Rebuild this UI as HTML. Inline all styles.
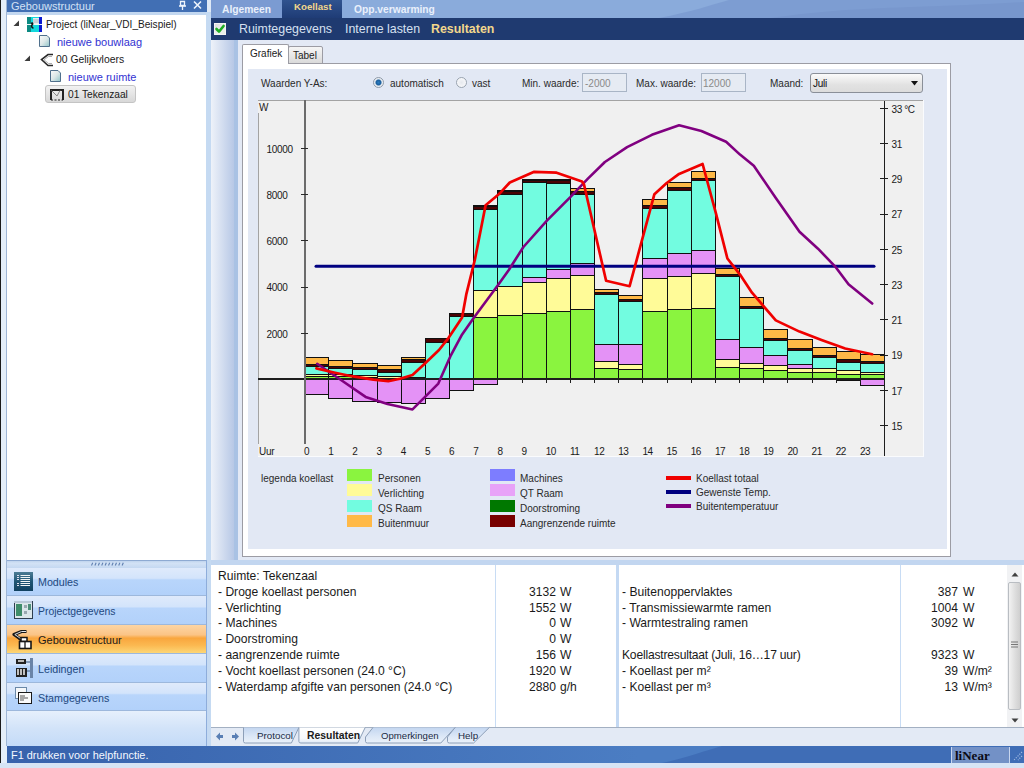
<!DOCTYPE html>
<html><head><meta charset="utf-8">
<style>
*{margin:0;padding:0;box-sizing:border-box}
html,body{width:1024px;height:768px;overflow:hidden;background:#dfe9f6;font-family:"Liberation Sans",sans-serif;position:relative}
.a{position:absolute}
.t{position:absolute;white-space:nowrap;line-height:1}
</style></head><body>
<!-- LEFT PANEL -->
<div class="a" style="left:0;top:0;width:1px;height:768px;background:#1a1a1a"></div>
<div class="a" style="left:1px;top:0;width:6px;height:768px;background:#e4eef9"></div>
<div class="a" style="left:6px;top:0;width:1px;height:746px;background:#9fb6d6"></div>
<div class="a" style="left:7px;top:0;width:200px;height:12px;background:#416fb4"></div>
<div class="t" style="left:11px;top:1px;font-size:11px;color:#d3e1f5;height:11px;overflow:hidden">Gebouwstructuur</div>
<svg class="a" style="left:178px;top:0" width="26" height="11"><path d="M180.5 1.5H184.5V5.5H180.5Z" transform="translate(-178 0)" fill="none" stroke="#eef4fc" stroke-width="1.3"/><path d="M1 6H8M4.5 6V10" stroke="#eef4fc" stroke-width="1.3"/><path d="M16 1.5L23 8.5M23 1.5L16 8.5" stroke="#eef4fc" stroke-width="1.6"/></svg>
<div class="a" style="left:7px;top:12px;width:200px;height:3px;background:#c2d7f0"></div>
<div class="a" style="left:7px;top:15px;width:199px;height:545px;background:#ffffff"></div>
<div class="a" style="left:206px;top:12px;width:5px;height:734px;background:#c5daf2"></div>

<!-- TREE -->
<svg class="a" style="left:13px;top:20px" width="7" height="7"><path d="M6 0.5V6H0.5Z" fill="#3c3c3c"/></svg>
<svg class="a" style="left:27px;top:17px" width="15" height="15">
<rect x="0" y="0" width="15" height="15" fill="#12d8dc"/>
<rect x="0" y="0" width="4" height="7" fill="#0c8a82"/><rect x="0" y="8" width="4" height="7" fill="#0c8a82"/>
<rect x="12" y="0" width="3" height="7" fill="#0a1ad0"/><rect x="12" y="8" width="3" height="7" fill="#0a1ad0"/>
<rect x="0" y="7" width="15" height="1" fill="#e8f8f8"/>
<rect x="6" y="1" width="6" height="6" fill="#e4ecec"/><path d="M7 2V6M9 2V6M11 2V6" stroke="#9ab" stroke-width="0.8"/>
<path d="M4 6.5C6 5.5 6 7 5 8C4 9 5 11 6.5 11" stroke="#111" stroke-width="1.6" fill="none"/>
</svg>
<div class="t" style="left:46px;top:20px;font-size:10.1px;color:#1a1a1a">Project (liNear_VDI_Beispiel)</div>
<svg class="a" style="left:39px;top:35px" width="12" height="13">
<defs><linearGradient id="dg" x1="0" y1="0" x2="1" y2="1"><stop offset="0" stop-color="#fafafa"/><stop offset="0.5" stop-color="#dde8e8"/><stop offset="1" stop-color="#8fc4c8"/></linearGradient></defs>
<path d="M0.5 0.5H8L10.5 3V11.5H0.5Z" fill="url(#dg)" stroke="#50708c"/>
</svg>
<div class="t" style="left:57px;top:37px;font-size:11px;color:#3232d2">nieuwe bouwlaag</div>
<svg class="a" style="left:24px;top:55px" width="7" height="7"><path d="M6 0.5V6H0.5Z" fill="#3c3c3c"/></svg>
<svg class="a" style="left:40px;top:53px" width="14" height="14"><path d="M13 1.5H8L1.5 6.5L8 12.5H13" fill="none" stroke="#2a2a2a" stroke-width="1.6"/><path d="M12 3.5H8.5L4 6.8L8.5 10.5H12" fill="none" stroke="#9a9a9a" stroke-width="0.8"/></svg>
<div class="t" style="left:56px;top:55px;font-size:10.4px;color:#1a1a1a">00 Gelijkvloers</div>
<svg class="a" style="left:50px;top:70px" width="12" height="13">
<path d="M0.5 0.5H8L10.5 3V11.5H0.5Z" fill="url(#dg)" stroke="#50708c"/>
</svg>
<div class="t" style="left:68px;top:72px;font-size:11px;color:#3232d2">nieuwe ruimte</div>
<div class="a" style="left:45px;top:85px;width:91px;height:18px;border:1px solid #c4c4c4;border-radius:3px;background:linear-gradient(#f2f2f2,#d8d8d8)"></div>
<svg class="a" style="left:50px;top:89px" width="14" height="12"><path d="M1 11V1H13V11" fill="none" stroke="#222" stroke-width="2"/><path d="M1.5 1.5L7 7L10 1.5" fill="none" stroke="#888" stroke-width="1"/><path d="M1 11H13" stroke="#222" stroke-width="1.2" stroke-dasharray="2 1.5"/></svg>
<div class="t" style="left:68px;top:90px;font-size:10.2px;color:#1a1a1a">01 Tekenzaal</div>

<!-- NAV BUTTONS -->
<div class="a" style="left:7px;top:568px;width:199px;height:28px;background:linear-gradient(#dfeafb 0%,#d3e4fb 38%,#b8d5fb 44%,#b2d1fa 100%);border-bottom:1px solid #9db8dc"></div>
<div class="a" style="left:7px;top:596px;width:199px;height:29px;background:linear-gradient(#dfeafb 0%,#d3e4fb 38%,#b8d5fb 44%,#b2d1fa 100%);border-bottom:1px solid #9db8dc"></div>
<div class="a" style="left:7px;top:625px;width:199px;height:29px;background:linear-gradient(#fdd5a4 0%,#fbc486 35%,#f9a63e 47%,#fbb850 72%,#fdd676 100%);border-bottom:1px solid #9db8dc"></div>
<div class="a" style="left:7px;top:654px;width:199px;height:29px;background:linear-gradient(#dfeafb 0%,#d3e4fb 38%,#b8d5fb 44%,#b2d1fa 100%);border-bottom:1px solid #9db8dc"></div>
<div class="a" style="left:7px;top:683px;width:199px;height:28px;background:linear-gradient(#dfeafb 0%,#d3e4fb 38%,#b8d5fb 44%,#b2d1fa 100%);border-bottom:1px solid #9db8dc"></div>
<div class="a" style="left:7px;top:711px;width:199px;height:35px;background:linear-gradient(#e6f0fc,#d2e3f9 50%,#c4dbf8)"></div>
<div class="a" style="left:206px;top:560px;width:1px;height:186px;background:#8eaddb"></div>
<div class="t" style="left:38px;top:577px;font-size:10.7px;color:#22487e">Modules</div>
<div class="t" style="left:38px;top:607px;font-size:10.4px;color:#22487e">Projectgegevens</div>
<div class="t" style="left:38px;top:635px;font-size:11px;color:#1a1a1a">Gebouwstructuur</div>
<div class="t" style="left:38px;top:664px;font-size:10.7px;color:#22487e">Leidingen</div>
<div class="t" style="left:38px;top:693px;font-size:10.7px;color:#22487e">Stamgegevens</div>
<svg class="a" style="left:14px;top:572px" width="19" height="19">
<defs><linearGradient id="mg" x1="0" y1="0" x2="0" y2="1"><stop offset="0" stop-color="#4c7c94"/><stop offset="0.5" stop-color="#1e5474"/><stop offset="1" stop-color="#104060"/></linearGradient></defs>
<rect x="0" y="0" width="19" height="19" fill="url(#mg)"/>
<path d="M3 3.5H5M3 5.5H5M3 7.5H5M3 11.5H5M3 13.5H5" stroke="#dde" stroke-width="1"/>
<path d="M6.5 3.5H16M6.5 5.5H16M6.5 7.5H16M6.5 9.5H16M6.5 11.5H16M6.5 13.5H16" stroke="#f0f4f4" stroke-width="1"/>
</svg>
<svg class="a" style="left:13px;top:600px" width="21" height="20">
<rect x="1.5" y="1.5" width="18" height="17" fill="#dbe6ea" stroke="#2e3e50"/>
<rect x="1" y="1" width="18" height="2" fill="#b8c8d8"/>
<rect x="3" y="4" width="6" height="12" fill="#3e8c6a"/>
<rect x="11" y="5" width="3" height="3" fill="#99a8b0"/><rect x="11" y="11" width="3" height="3" fill="#99a8b0"/>
<rect x="15" y="4" width="3" height="6" fill="#4d8e78"/>
</svg>
<svg class="a" style="left:12px;top:629px" width="21" height="21">
<path d="M14.5 2.5H9.5L2 5.5L7 9L10 11.5" fill="none" stroke="#161616" stroke-width="3.2" stroke-linejoin="round"/>
<path d="M14 2.5H9.5L2.8 5.5L7.3 8.6L9.8 10.6" fill="none" stroke="#dfe3e8" stroke-width="1"/>
<rect x="9" y="8.5" width="6" height="4" fill="#fff" stroke="#161616" stroke-width="1.5"/>
<rect x="7.5" y="12.5" width="11.5" height="7" fill="#fff" stroke="#161616" stroke-width="1.6"/>
<path d="M13 12.5V19.5" stroke="#161616" stroke-width="1.3"/>
</svg>
<svg class="a" style="left:16px;top:658px" width="18" height="20">
<rect x="0" y="1" width="10" height="5" fill="#222"/><path d="M2 3H8" stroke="#eee" stroke-width="1.5"/>
<rect x="0" y="10" width="11" height="9" fill="#222"/><path d="M2 11V17M5 11V17M8 11V17" stroke="#f4f4f4" stroke-width="1.5"/>
<rect x="14" y="0" width="3" height="20" fill="#6a84a8"/><path d="M10 4H14M11 13H14" stroke="#6a84a8" stroke-width="1.5"/>
</svg>
<svg class="a" style="left:15px;top:687px" width="17" height="18">
<rect x="0.5" y="0.5" width="11" height="11" fill="#f6f8fa" stroke="#6a88a8"/>
<rect x="3.5" y="5.5" width="13" height="11" fill="#fafafa" stroke="#1a1a1a"/>
<path d="M5 9H10M5 11H13M5 13H9" stroke="#555" stroke-width="1"/>
</svg>
<!-- SPLITTER + NAV -->
<div class="a" style="left:7px;top:560px;width:199px;height:8px;background:linear-gradient(#b6cdea,#d3e2f5 40%,#c4d8f1)"></div>
<div class="a" style="left:7px;top:560px;width:199px;height:1px;background:#8eaad2"></div>
<svg class="a" style="left:90px;top:562px" width="36" height="4"><path d="M1.5 3.5L2.7 0.8" stroke="#5f7fb0" stroke-width="1.1"/><path d="M4.9 3.5L6.1 0.8" stroke="#5f7fb0" stroke-width="1.1"/><path d="M8.3 3.5L9.5 0.8" stroke="#5f7fb0" stroke-width="1.1"/><path d="M11.7 3.5L12.9 0.8" stroke="#5f7fb0" stroke-width="1.1"/><path d="M15.1 3.5L16.3 0.8" stroke="#5f7fb0" stroke-width="1.1"/><path d="M18.5 3.5L19.7 0.8" stroke="#5f7fb0" stroke-width="1.1"/><path d="M21.9 3.5L23.1 0.8" stroke="#5f7fb0" stroke-width="1.1"/><path d="M25.3 3.5L26.5 0.8" stroke="#5f7fb0" stroke-width="1.1"/><path d="M28.7 3.5L29.9 0.8" stroke="#5f7fb0" stroke-width="1.1"/><path d="M32.1 3.5L33.3 0.8" stroke="#5f7fb0" stroke-width="1.1"/></svg>

<!-- RIGHT TOP -->
<svg class="a" style="left:211px;top:0" width="813" height="18"><rect width="813" height="18" fill="#8aabdb"/>
<path d="M448 18C480 12 500 5 518 0H813V18Z" fill="#7d9dd2"/><path d="M560 18C600 12 640 9 700 7C740 6 780 4 813 2V18Z" fill="#7897cd"/>
<rect x="0" y="0" width="71" height="18" fill="#7b9bd2"/></svg>
<div class="a" style="left:282px;top:0;width:60px;height:18px;background:linear-gradient(#30538f,#1f3c76)"></div>
<div class="t" style="left:222px;top:5px;font-size:10.25px;font-weight:bold;color:#e9f0fb">Algemeen</div>
<div class="t" style="left:294px;top:2px;font-size:9.7px;font-weight:bold;color:#f2d78c">Koellast</div>
<div class="t" style="left:354px;top:5px;font-size:10.25px;font-weight:bold;color:#e9f0fb">Opp.verwarming</div>
<div class="a" style="left:211px;top:18px;width:813px;height:22px;background:#1f3a70"></div>
<div class="a" style="left:214px;top:23px;width:12px;height:12px;background:linear-gradient(135deg,#dcdcdc,#f0f0f0 60%,#e6f0e6);border:1px solid #f4f4f4"></div>
<svg class="a" style="left:214px;top:23px" width="12" height="12"><path d="M2.5 6L5 8.6L9.6 3" fill="none" stroke="#1fae24" stroke-width="2.6" stroke-linecap="round" stroke-linejoin="round"/></svg>
<div class="t" style="left:239px;top:23px;font-size:12.4px;color:#d6e0f0">Ruimtegegevens</div>
<div class="t" style="left:345px;top:23px;font-size:12.4px;color:#d6e0f0">Interne lasten</div>
<div class="t" style="left:431px;top:23px;font-size:12.4px;font-weight:bold;color:#f2d78c">Resultaten</div>

<!-- CONTENT AREA -->
<div class="a" style="left:211px;top:40px;width:813px;height:520px;background:#e3e9f5"></div>
<div class="a" style="left:211px;top:40px;width:23px;height:520px;background:linear-gradient(90deg,#eef2f9,#b7c8e6)"></div>
<div class="a" style="left:234px;top:40px;width:4px;height:520px;background:#a9c2e4"></div>

<!-- TAB CONTROL -->
<div class="a" style="left:242px;top:63px;width:709px;height:494px;border:1px solid #9c9ca4;background:#fff"></div>
<div class="a" style="left:242px;top:44px;width:47px;height:20px;border:1px solid #9c9ca4;border-bottom:none;background:#fff;border-radius:2px 2px 0 0"></div>
<div class="a" style="left:288px;top:46px;width:35px;height:18px;border:1px solid #9c9ca4;background:linear-gradient(#f6f6f6,#dadada);border-radius:2px 2px 0 0"></div>
<div class="t" style="left:250px;top:49px;font-size:10px;color:#222">Grafiek</div>
<div class="t" style="left:293px;top:51px;font-size:10px;color:#222">Tabel</div>
<div class="a" style="left:248px;top:69px;width:699px;height:480px;background:#e2e8f4"></div>


<!-- CHART CONTROLS -->
<div class="t" style="left:261px;top:79px;font-size:10px;color:#2a2a2a">Waarden Y-As:</div>
<div class="a" style="left:373px;top:77px;width:11px;height:11px;border-radius:50%;border:1px solid #8e9aa8;background:radial-gradient(circle at 50% 50%,#2a7cc0 0,#1c5f9c 2.5px,#dfe6ee 3.5px,#f6f8fa 5px)"></div>
<div class="t" style="left:390px;top:79px;font-size:10px;color:#2a2a2a">automatisch</div>
<div class="a" style="left:456px;top:77px;width:11px;height:11px;border-radius:50%;border:1px solid #9aa4b0;background:radial-gradient(circle at 50% 50%,#e6e9ee 0,#f8f9fb 5px)"></div>
<div class="t" style="left:472px;top:79px;font-size:10px;color:#2a2a2a">vast</div>
<div class="t" style="left:522px;top:79px;font-size:10px;color:#2a2a2a">Min. waarde:</div>
<div class="a" style="left:582px;top:73px;width:45px;height:19px;border:1px solid #a9b5c6;background:#e6ebf3"></div>
<div class="t" style="left:585px;top:79px;font-size:10px;color:#8a8a8a">-2000</div>
<div class="t" style="left:636px;top:79px;font-size:10px;color:#2a2a2a">Max. waarde:</div>
<div class="a" style="left:701px;top:73px;width:45px;height:19px;border:1px solid #a9b5c6;background:#e6ebf3"></div>
<div class="t" style="left:703px;top:79px;font-size:10px;color:#8a8a8a">12000</div>
<div class="t" style="left:770px;top:79px;font-size:10px;color:#2a2a2a">Maand:</div>
<div class="a" style="left:810px;top:73px;width:113px;height:20px;border:1px solid #8a8f98;border-radius:3px;background:linear-gradient(#fbfbfb,#e2e2e2 60%,#dcdcdc)"></div>
<div class="t" style="left:813px;top:79px;font-size:10px;color:#111;letter-spacing:-0.3px">Juli</div>
<svg class="a" style="left:911px;top:81px" width="8" height="5"><path d="M0 0H7L3.5 4.5Z" fill="#111"/></svg>

<!-- LEGEND TEXT -->
<div class="t" style="left:261px;top:474px;font-size:10px;color:#2a2a2a">legenda koellast</div>
<div class="t" style="left:378px;top:474px;font-size:10px;color:#2a2a2a">Personen</div>
<div class="t" style="left:378px;top:489px;font-size:10px;color:#2a2a2a">Verlichting</div>
<div class="t" style="left:378px;top:504px;font-size:10px;color:#2a2a2a">QS Raam</div>
<div class="t" style="left:378px;top:519px;font-size:10px;color:#2a2a2a">Buitenmuur</div>
<div class="t" style="left:520px;top:474px;font-size:10px;color:#2a2a2a">Machines</div>
<div class="t" style="left:520px;top:489px;font-size:10px;color:#2a2a2a">QT Raam</div>
<div class="t" style="left:520px;top:504px;font-size:10px;color:#2a2a2a">Doorstroming</div>
<div class="t" style="left:520px;top:519px;font-size:10px;color:#2a2a2a">Aangrenzende ruimte</div>
<div class="t" style="left:696px;top:474px;font-size:10px;color:#2a2a2a">Koellast totaal</div>
<div class="t" style="left:696px;top:488px;font-size:10px;color:#2a2a2a">Gewenste Temp.</div>
<div class="t" style="left:696px;top:502px;font-size:10px;color:#2a2a2a">Buitentemperatuur</div>
<svg class="a" style="left:0;top:0" width="1024" height="768" shape-rendering="crispEdges">
<rect x="258" y="100" width="665" height="356" fill="#f0f0f0"/>
<rect x="258" y="456" width="666" height="1" fill="#fafbfd"/>
<rect x="923" y="100" width="1" height="357" fill="#fafbfd"/>
<rect x="258" y="100" width="665" height="1" fill="#a3a3a3"/>
<rect x="258" y="113" width="1" height="331" fill="#a3a3a3"/>
<rect x="304" y="357" width="24" height="7" fill="#ffb947"/>
<rect x="304" y="364" width="24" height="2" fill="#4a0404"/>
<rect x="304" y="366" width="24" height="8" fill="#72fce0"/>
<rect x="304" y="374" width="24" height="2" fill="#fffb98"/>
<rect x="304" y="376" width="24" height="2" fill="#8af43f"/>
<rect x="304" y="379" width="24" height="15" fill="#e492f6"/>
<path d="M304.5 357.5H328.5V364.5H304.5Z" fill="none" stroke="#101010" stroke-width="1"/>
<path d="M304.5 364.5H328.5V366.5H304.5Z" fill="none" stroke="#101010" stroke-width="1"/>
<path d="M304.5 366.5H328.5V374.5H304.5Z" fill="none" stroke="#101010" stroke-width="1"/>
<path d="M304.5 374.5H328.5V376.5H304.5Z" fill="none" stroke="#101010" stroke-width="1"/>
<path d="M304.5 376.5H328.5V378.5H304.5Z" fill="none" stroke="#101010" stroke-width="1"/>
<path d="M304.5 379.5H328.5V394.5H304.5Z" fill="none" stroke="#101010" stroke-width="1"/>
<rect x="328" y="360" width="24" height="6" fill="#ffb947"/>
<rect x="328" y="366" width="24" height="2" fill="#4a0404"/>
<rect x="328" y="368" width="24" height="6" fill="#72fce0"/>
<rect x="328" y="374" width="24" height="2" fill="#fffb98"/>
<rect x="328" y="376" width="24" height="2" fill="#8af43f"/>
<rect x="328" y="379" width="24" height="19" fill="#e492f6"/>
<path d="M328.5 360.5H352.5V366.5H328.5Z" fill="none" stroke="#101010" stroke-width="1"/>
<path d="M328.5 366.5H352.5V368.5H328.5Z" fill="none" stroke="#101010" stroke-width="1"/>
<path d="M328.5 368.5H352.5V374.5H328.5Z" fill="none" stroke="#101010" stroke-width="1"/>
<path d="M328.5 374.5H352.5V376.5H328.5Z" fill="none" stroke="#101010" stroke-width="1"/>
<path d="M328.5 376.5H352.5V378.5H328.5Z" fill="none" stroke="#101010" stroke-width="1"/>
<path d="M328.5 379.5H352.5V398.5H328.5Z" fill="none" stroke="#101010" stroke-width="1"/>
<rect x="352" y="363" width="25" height="4" fill="#ffb947"/>
<rect x="352" y="367" width="25" height="2" fill="#4a0404"/>
<rect x="352" y="369" width="25" height="6" fill="#72fce0"/>
<rect x="352" y="375" width="25" height="2" fill="#fffb98"/>
<rect x="352" y="377" width="25" height="1" fill="#8af43f"/>
<rect x="352" y="379" width="25" height="22" fill="#e492f6"/>
<path d="M352.5 363.5H377.5V367.5H352.5Z" fill="none" stroke="#101010" stroke-width="1"/>
<path d="M352.5 367.5H377.5V369.5H352.5Z" fill="none" stroke="#101010" stroke-width="1"/>
<path d="M352.5 369.5H377.5V375.5H352.5Z" fill="none" stroke="#101010" stroke-width="1"/>
<path d="M352.5 375.5H377.5V377.5H352.5Z" fill="none" stroke="#101010" stroke-width="1"/>
<path d="M352.5 377.5H377.5V378.5H352.5Z" fill="none" stroke="#101010" stroke-width="1"/>
<path d="M352.5 379.5H377.5V401.5H352.5Z" fill="none" stroke="#101010" stroke-width="1"/>
<rect x="377" y="365" width="24" height="4" fill="#ffb947"/>
<rect x="377" y="369" width="24" height="3" fill="#4a0404"/>
<rect x="377" y="372" width="24" height="4" fill="#72fce0"/>
<rect x="377" y="376" width="24" height="2" fill="#fffb98"/>
<rect x="377" y="378" width="24" height="1" fill="#8af43f"/>
<rect x="377" y="379" width="24" height="23" fill="#e492f6"/>
<path d="M377.5 365.5H401.5V369.5H377.5Z" fill="none" stroke="#101010" stroke-width="1"/>
<path d="M377.5 369.5H401.5V372.5H377.5Z" fill="none" stroke="#101010" stroke-width="1"/>
<path d="M377.5 372.5H401.5V376.5H377.5Z" fill="none" stroke="#101010" stroke-width="1"/>
<path d="M377.5 376.5H401.5V378.5H377.5Z" fill="none" stroke="#101010" stroke-width="1"/>
<path d="M377.5 378.5H401.5V378.5H377.5Z" fill="none" stroke="#101010" stroke-width="1"/>
<path d="M377.5 379.5H401.5V402.5H377.5Z" fill="none" stroke="#101010" stroke-width="1"/>
<rect x="401" y="357" width="24" height="2" fill="#ffb947"/>
<rect x="401" y="359" width="24" height="3" fill="#4a0404"/>
<rect x="401" y="362" width="24" height="15" fill="#72fce0"/>
<rect x="401" y="377" width="24" height="1" fill="#fffb98"/>
<rect x="401" y="378" width="24" height="1" fill="#8af43f"/>
<rect x="401" y="379" width="24" height="24" fill="#e492f6"/>
<path d="M401.5 357.5H425.5V359.5H401.5Z" fill="none" stroke="#101010" stroke-width="1"/>
<path d="M401.5 359.5H425.5V362.5H401.5Z" fill="none" stroke="#101010" stroke-width="1"/>
<path d="M401.5 362.5H425.5V377.5H401.5Z" fill="none" stroke="#101010" stroke-width="1"/>
<path d="M401.5 377.5H425.5V378.5H401.5Z" fill="none" stroke="#101010" stroke-width="1"/>
<path d="M401.5 378.5H425.5V378.5H401.5Z" fill="none" stroke="#101010" stroke-width="1"/>
<path d="M401.5 379.5H425.5V403.5H401.5Z" fill="none" stroke="#101010" stroke-width="1"/>
<rect x="425" y="338" width="24" height="1" fill="#ffb947"/>
<rect x="425" y="338" width="24" height="4" fill="#4a0404"/>
<rect x="425" y="342" width="24" height="36" fill="#72fce0"/>
<rect x="425" y="378" width="24" height="1" fill="#8af43f"/>
<rect x="425" y="379" width="24" height="19" fill="#e492f6"/>
<path d="M425.5 338.5H449.5V338.5H425.5Z" fill="none" stroke="#101010" stroke-width="1"/>
<path d="M425.5 338.5H449.5V342.5H425.5Z" fill="none" stroke="#101010" stroke-width="1"/>
<path d="M425.5 342.5H449.5V378.5H425.5Z" fill="none" stroke="#101010" stroke-width="1"/>
<path d="M425.5 378.5H449.5V378.5H425.5Z" fill="none" stroke="#101010" stroke-width="1"/>
<path d="M425.5 379.5H449.5V398.5H425.5Z" fill="none" stroke="#101010" stroke-width="1"/>
<rect x="449" y="313" width="24" height="1" fill="#ffb947"/>
<rect x="449" y="313" width="24" height="3" fill="#4a0404"/>
<rect x="449" y="316" width="24" height="62" fill="#72fce0"/>
<rect x="449" y="379" width="24" height="11" fill="#e492f6"/>
<path d="M449.5 313.5H473.5V313.5H449.5Z" fill="none" stroke="#101010" stroke-width="1"/>
<path d="M449.5 313.5H473.5V316.5H449.5Z" fill="none" stroke="#101010" stroke-width="1"/>
<path d="M449.5 316.5H473.5V378.5H449.5Z" fill="none" stroke="#101010" stroke-width="1"/>
<path d="M449.5 379.5H473.5V390.5H449.5Z" fill="none" stroke="#101010" stroke-width="1"/>
<rect x="473" y="205" width="24" height="1" fill="#ffb947"/>
<rect x="473" y="206" width="24" height="3" fill="#4a0404"/>
<rect x="473" y="209" width="24" height="81" fill="#72fce0"/>
<rect x="473" y="290" width="24" height="27" fill="#fffb98"/>
<rect x="473" y="317" width="24" height="61" fill="#8af43f"/>
<rect x="473" y="379" width="24" height="5" fill="#e492f6"/>
<path d="M473.5 205.5H497.5V206.5H473.5Z" fill="none" stroke="#101010" stroke-width="1"/>
<path d="M473.5 206.5H497.5V209.5H473.5Z" fill="none" stroke="#101010" stroke-width="1"/>
<path d="M473.5 209.5H497.5V290.5H473.5Z" fill="none" stroke="#101010" stroke-width="1"/>
<path d="M473.5 290.5H497.5V317.5H473.5Z" fill="none" stroke="#101010" stroke-width="1"/>
<path d="M473.5 317.5H497.5V378.5H473.5Z" fill="none" stroke="#101010" stroke-width="1"/>
<path d="M473.5 379.5H497.5V384.5H473.5Z" fill="none" stroke="#101010" stroke-width="1"/>
<rect x="497" y="190" width="25" height="1" fill="#ffb947"/>
<rect x="497" y="191" width="25" height="3" fill="#4a0404"/>
<rect x="497" y="194" width="25" height="92" fill="#72fce0"/>
<rect x="497" y="286" width="25" height="29" fill="#fffb98"/>
<rect x="497" y="315" width="25" height="63" fill="#8af43f"/>
<path d="M497.5 190.5H522.5V191.5H497.5Z" fill="none" stroke="#101010" stroke-width="1"/>
<path d="M497.5 191.5H522.5V194.5H497.5Z" fill="none" stroke="#101010" stroke-width="1"/>
<path d="M497.5 194.5H522.5V286.5H497.5Z" fill="none" stroke="#101010" stroke-width="1"/>
<path d="M497.5 286.5H522.5V315.5H497.5Z" fill="none" stroke="#101010" stroke-width="1"/>
<path d="M497.5 315.5H522.5V378.5H497.5Z" fill="none" stroke="#101010" stroke-width="1"/>
<rect x="522" y="179" width="24" height="1" fill="#ffb947"/>
<rect x="522" y="180" width="24" height="2" fill="#4a0404"/>
<rect x="522" y="182" width="24" height="95" fill="#72fce0"/>
<rect x="522" y="277" width="24" height="5" fill="#e492f6"/>
<rect x="522" y="282" width="24" height="31" fill="#fffb98"/>
<rect x="522" y="313" width="24" height="65" fill="#8af43f"/>
<path d="M522.5 179.5H546.5V180.5H522.5Z" fill="none" stroke="#101010" stroke-width="1"/>
<path d="M522.5 180.5H546.5V182.5H522.5Z" fill="none" stroke="#101010" stroke-width="1"/>
<path d="M522.5 182.5H546.5V277.5H522.5Z" fill="none" stroke="#101010" stroke-width="1"/>
<path d="M522.5 277.5H546.5V282.5H522.5Z" fill="none" stroke="#101010" stroke-width="1"/>
<path d="M522.5 282.5H546.5V313.5H522.5Z" fill="none" stroke="#101010" stroke-width="1"/>
<path d="M522.5 313.5H546.5V378.5H522.5Z" fill="none" stroke="#101010" stroke-width="1"/>
<rect x="546" y="179" width="24" height="1" fill="#ffb947"/>
<rect x="546" y="180" width="24" height="3" fill="#4a0404"/>
<rect x="546" y="183" width="24" height="86" fill="#72fce0"/>
<rect x="546" y="269" width="24" height="9" fill="#e492f6"/>
<rect x="546" y="278" width="24" height="33" fill="#fffb98"/>
<rect x="546" y="311" width="24" height="67" fill="#8af43f"/>
<path d="M546.5 179.5H570.5V180.5H546.5Z" fill="none" stroke="#101010" stroke-width="1"/>
<path d="M546.5 180.5H570.5V183.5H546.5Z" fill="none" stroke="#101010" stroke-width="1"/>
<path d="M546.5 183.5H570.5V269.5H546.5Z" fill="none" stroke="#101010" stroke-width="1"/>
<path d="M546.5 269.5H570.5V278.5H546.5Z" fill="none" stroke="#101010" stroke-width="1"/>
<path d="M546.5 278.5H570.5V311.5H546.5Z" fill="none" stroke="#101010" stroke-width="1"/>
<path d="M546.5 311.5H570.5V378.5H546.5Z" fill="none" stroke="#101010" stroke-width="1"/>
<rect x="570" y="188" width="24" height="3" fill="#ffb947"/>
<rect x="570" y="191" width="24" height="3" fill="#4a0404"/>
<rect x="570" y="194" width="24" height="69" fill="#72fce0"/>
<rect x="570" y="263" width="24" height="12" fill="#e492f6"/>
<rect x="570" y="275" width="24" height="34" fill="#fffb98"/>
<rect x="570" y="309" width="24" height="69" fill="#8af43f"/>
<path d="M570.5 188.5H594.5V191.5H570.5Z" fill="none" stroke="#101010" stroke-width="1"/>
<path d="M570.5 191.5H594.5V194.5H570.5Z" fill="none" stroke="#101010" stroke-width="1"/>
<path d="M570.5 194.5H594.5V263.5H570.5Z" fill="none" stroke="#101010" stroke-width="1"/>
<path d="M570.5 263.5H594.5V275.5H570.5Z" fill="none" stroke="#101010" stroke-width="1"/>
<path d="M570.5 275.5H594.5V309.5H570.5Z" fill="none" stroke="#101010" stroke-width="1"/>
<path d="M570.5 309.5H594.5V378.5H570.5Z" fill="none" stroke="#101010" stroke-width="1"/>
<rect x="594" y="289" width="24" height="3" fill="#ffb947"/>
<rect x="594" y="292" width="24" height="2" fill="#4a0404"/>
<rect x="594" y="294" width="24" height="50" fill="#72fce0"/>
<rect x="594" y="344" width="24" height="17" fill="#e492f6"/>
<rect x="594" y="361" width="24" height="7" fill="#fffb98"/>
<rect x="594" y="368" width="24" height="10" fill="#8af43f"/>
<path d="M594.5 289.5H618.5V292.5H594.5Z" fill="none" stroke="#101010" stroke-width="1"/>
<path d="M594.5 292.5H618.5V294.5H594.5Z" fill="none" stroke="#101010" stroke-width="1"/>
<path d="M594.5 294.5H618.5V344.5H594.5Z" fill="none" stroke="#101010" stroke-width="1"/>
<path d="M594.5 344.5H618.5V361.5H594.5Z" fill="none" stroke="#101010" stroke-width="1"/>
<path d="M594.5 361.5H618.5V368.5H594.5Z" fill="none" stroke="#101010" stroke-width="1"/>
<path d="M594.5 368.5H618.5V378.5H594.5Z" fill="none" stroke="#101010" stroke-width="1"/>
<rect x="618" y="295" width="24" height="4" fill="#ffb947"/>
<rect x="618" y="299" width="24" height="2" fill="#4a0404"/>
<rect x="618" y="301" width="24" height="43" fill="#72fce0"/>
<rect x="618" y="344" width="24" height="20" fill="#e492f6"/>
<rect x="618" y="364" width="24" height="5" fill="#fffb98"/>
<rect x="618" y="369" width="24" height="9" fill="#8af43f"/>
<path d="M618.5 295.5H642.5V299.5H618.5Z" fill="none" stroke="#101010" stroke-width="1"/>
<path d="M618.5 299.5H642.5V301.5H618.5Z" fill="none" stroke="#101010" stroke-width="1"/>
<path d="M618.5 301.5H642.5V344.5H618.5Z" fill="none" stroke="#101010" stroke-width="1"/>
<path d="M618.5 344.5H642.5V364.5H618.5Z" fill="none" stroke="#101010" stroke-width="1"/>
<path d="M618.5 364.5H642.5V369.5H618.5Z" fill="none" stroke="#101010" stroke-width="1"/>
<path d="M618.5 369.5H642.5V378.5H618.5Z" fill="none" stroke="#101010" stroke-width="1"/>
<rect x="642" y="199" width="25" height="6" fill="#ffb947"/>
<rect x="642" y="205" width="25" height="3" fill="#4a0404"/>
<rect x="642" y="208" width="25" height="50" fill="#72fce0"/>
<rect x="642" y="258" width="25" height="20" fill="#e492f6"/>
<rect x="642" y="278" width="25" height="33" fill="#fffb98"/>
<rect x="642" y="311" width="25" height="67" fill="#8af43f"/>
<path d="M642.5 199.5H667.5V205.5H642.5Z" fill="none" stroke="#101010" stroke-width="1"/>
<path d="M642.5 205.5H667.5V208.5H642.5Z" fill="none" stroke="#101010" stroke-width="1"/>
<path d="M642.5 208.5H667.5V258.5H642.5Z" fill="none" stroke="#101010" stroke-width="1"/>
<path d="M642.5 258.5H667.5V278.5H642.5Z" fill="none" stroke="#101010" stroke-width="1"/>
<path d="M642.5 278.5H667.5V311.5H642.5Z" fill="none" stroke="#101010" stroke-width="1"/>
<path d="M642.5 311.5H667.5V378.5H642.5Z" fill="none" stroke="#101010" stroke-width="1"/>
<rect x="667" y="182" width="24" height="5" fill="#ffb947"/>
<rect x="667" y="187" width="24" height="3" fill="#4a0404"/>
<rect x="667" y="190" width="24" height="63" fill="#72fce0"/>
<rect x="667" y="253" width="24" height="23" fill="#e492f6"/>
<rect x="667" y="276" width="24" height="33" fill="#fffb98"/>
<rect x="667" y="309" width="24" height="69" fill="#8af43f"/>
<path d="M667.5 182.5H691.5V187.5H667.5Z" fill="none" stroke="#101010" stroke-width="1"/>
<path d="M667.5 187.5H691.5V190.5H667.5Z" fill="none" stroke="#101010" stroke-width="1"/>
<path d="M667.5 190.5H691.5V253.5H667.5Z" fill="none" stroke="#101010" stroke-width="1"/>
<path d="M667.5 253.5H691.5V276.5H667.5Z" fill="none" stroke="#101010" stroke-width="1"/>
<path d="M667.5 276.5H691.5V309.5H667.5Z" fill="none" stroke="#101010" stroke-width="1"/>
<path d="M667.5 309.5H691.5V378.5H667.5Z" fill="none" stroke="#101010" stroke-width="1"/>
<rect x="691" y="171" width="24" height="7" fill="#ffb947"/>
<rect x="691" y="178" width="24" height="2" fill="#4a0404"/>
<rect x="691" y="180" width="24" height="70" fill="#72fce0"/>
<rect x="691" y="250" width="24" height="23" fill="#e492f6"/>
<rect x="691" y="273" width="24" height="35" fill="#fffb98"/>
<rect x="691" y="308" width="24" height="70" fill="#8af43f"/>
<path d="M691.5 171.5H715.5V178.5H691.5Z" fill="none" stroke="#101010" stroke-width="1"/>
<path d="M691.5 178.5H715.5V180.5H691.5Z" fill="none" stroke="#101010" stroke-width="1"/>
<path d="M691.5 180.5H715.5V250.5H691.5Z" fill="none" stroke="#101010" stroke-width="1"/>
<path d="M691.5 250.5H715.5V273.5H691.5Z" fill="none" stroke="#101010" stroke-width="1"/>
<path d="M691.5 273.5H715.5V308.5H691.5Z" fill="none" stroke="#101010" stroke-width="1"/>
<path d="M691.5 308.5H715.5V378.5H691.5Z" fill="none" stroke="#101010" stroke-width="1"/>
<rect x="715" y="268" width="24" height="6" fill="#ffb947"/>
<rect x="715" y="274" width="24" height="2" fill="#4a0404"/>
<rect x="715" y="276" width="24" height="63" fill="#72fce0"/>
<rect x="715" y="339" width="24" height="20" fill="#e492f6"/>
<rect x="715" y="359" width="24" height="8" fill="#fffb98"/>
<rect x="715" y="367" width="24" height="11" fill="#8af43f"/>
<path d="M715.5 268.5H739.5V274.5H715.5Z" fill="none" stroke="#101010" stroke-width="1"/>
<path d="M715.5 274.5H739.5V276.5H715.5Z" fill="none" stroke="#101010" stroke-width="1"/>
<path d="M715.5 276.5H739.5V339.5H715.5Z" fill="none" stroke="#101010" stroke-width="1"/>
<path d="M715.5 339.5H739.5V359.5H715.5Z" fill="none" stroke="#101010" stroke-width="1"/>
<path d="M715.5 359.5H739.5V367.5H715.5Z" fill="none" stroke="#101010" stroke-width="1"/>
<path d="M715.5 367.5H739.5V378.5H715.5Z" fill="none" stroke="#101010" stroke-width="1"/>
<rect x="739" y="297" width="24" height="9" fill="#ffb947"/>
<rect x="739" y="306" width="24" height="2" fill="#4a0404"/>
<rect x="739" y="308" width="24" height="39" fill="#72fce0"/>
<rect x="739" y="347" width="24" height="16" fill="#e492f6"/>
<rect x="739" y="363" width="24" height="5" fill="#fffb98"/>
<rect x="739" y="368" width="24" height="10" fill="#8af43f"/>
<path d="M739.5 297.5H763.5V306.5H739.5Z" fill="none" stroke="#101010" stroke-width="1"/>
<path d="M739.5 306.5H763.5V308.5H739.5Z" fill="none" stroke="#101010" stroke-width="1"/>
<path d="M739.5 308.5H763.5V347.5H739.5Z" fill="none" stroke="#101010" stroke-width="1"/>
<path d="M739.5 347.5H763.5V363.5H739.5Z" fill="none" stroke="#101010" stroke-width="1"/>
<path d="M739.5 363.5H763.5V368.5H739.5Z" fill="none" stroke="#101010" stroke-width="1"/>
<path d="M739.5 368.5H763.5V378.5H739.5Z" fill="none" stroke="#101010" stroke-width="1"/>
<rect x="763" y="329" width="24" height="9" fill="#ffb947"/>
<rect x="763" y="338" width="24" height="2" fill="#4a0404"/>
<rect x="763" y="340" width="24" height="15" fill="#72fce0"/>
<rect x="763" y="355" width="24" height="10" fill="#e492f6"/>
<rect x="763" y="365" width="24" height="5" fill="#fffb98"/>
<rect x="763" y="370" width="24" height="8" fill="#8af43f"/>
<path d="M763.5 329.5H787.5V338.5H763.5Z" fill="none" stroke="#101010" stroke-width="1"/>
<path d="M763.5 338.5H787.5V340.5H763.5Z" fill="none" stroke="#101010" stroke-width="1"/>
<path d="M763.5 340.5H787.5V355.5H763.5Z" fill="none" stroke="#101010" stroke-width="1"/>
<path d="M763.5 355.5H787.5V365.5H763.5Z" fill="none" stroke="#101010" stroke-width="1"/>
<path d="M763.5 365.5H787.5V370.5H763.5Z" fill="none" stroke="#101010" stroke-width="1"/>
<path d="M763.5 370.5H787.5V378.5H763.5Z" fill="none" stroke="#101010" stroke-width="1"/>
<rect x="787" y="339" width="25" height="9" fill="#ffb947"/>
<rect x="787" y="348" width="25" height="2" fill="#4a0404"/>
<rect x="787" y="350" width="25" height="14" fill="#72fce0"/>
<rect x="787" y="364" width="25" height="4" fill="#e492f6"/>
<rect x="787" y="368" width="25" height="4" fill="#fffb98"/>
<rect x="787" y="372" width="25" height="6" fill="#8af43f"/>
<path d="M787.5 339.5H812.5V348.5H787.5Z" fill="none" stroke="#101010" stroke-width="1"/>
<path d="M787.5 348.5H812.5V350.5H787.5Z" fill="none" stroke="#101010" stroke-width="1"/>
<path d="M787.5 350.5H812.5V364.5H787.5Z" fill="none" stroke="#101010" stroke-width="1"/>
<path d="M787.5 364.5H812.5V368.5H787.5Z" fill="none" stroke="#101010" stroke-width="1"/>
<path d="M787.5 368.5H812.5V372.5H787.5Z" fill="none" stroke="#101010" stroke-width="1"/>
<path d="M787.5 372.5H812.5V378.5H787.5Z" fill="none" stroke="#101010" stroke-width="1"/>
<rect x="812" y="347" width="24" height="8" fill="#ffb947"/>
<rect x="812" y="355" width="24" height="2" fill="#4a0404"/>
<rect x="812" y="357" width="24" height="11" fill="#72fce0"/>
<rect x="812" y="368" width="24" height="4" fill="#fffb98"/>
<rect x="812" y="372" width="24" height="6" fill="#8af43f"/>
<path d="M812.5 347.5H836.5V355.5H812.5Z" fill="none" stroke="#101010" stroke-width="1"/>
<path d="M812.5 355.5H836.5V357.5H812.5Z" fill="none" stroke="#101010" stroke-width="1"/>
<path d="M812.5 357.5H836.5V368.5H812.5Z" fill="none" stroke="#101010" stroke-width="1"/>
<path d="M812.5 368.5H836.5V372.5H812.5Z" fill="none" stroke="#101010" stroke-width="1"/>
<path d="M812.5 372.5H836.5V378.5H812.5Z" fill="none" stroke="#101010" stroke-width="1"/>
<rect x="836" y="351" width="24" height="8" fill="#ffb947"/>
<rect x="836" y="359" width="24" height="3" fill="#4a0404"/>
<rect x="836" y="362" width="24" height="8" fill="#72fce0"/>
<rect x="836" y="370" width="24" height="4" fill="#fffb98"/>
<rect x="836" y="374" width="24" height="4" fill="#8af43f"/>
<rect x="836" y="379" width="24" height="1" fill="#303030"/>
<path d="M836.5 351.5H860.5V359.5H836.5Z" fill="none" stroke="#101010" stroke-width="1"/>
<path d="M836.5 359.5H860.5V362.5H836.5Z" fill="none" stroke="#101010" stroke-width="1"/>
<path d="M836.5 362.5H860.5V370.5H836.5Z" fill="none" stroke="#101010" stroke-width="1"/>
<path d="M836.5 370.5H860.5V374.5H836.5Z" fill="none" stroke="#101010" stroke-width="1"/>
<path d="M836.5 374.5H860.5V378.5H836.5Z" fill="none" stroke="#101010" stroke-width="1"/>
<path d="M836.5 379.5H860.5V380.5H836.5Z" fill="none" stroke="#101010" stroke-width="1"/>
<rect x="860" y="354" width="24" height="7" fill="#ffb947"/>
<rect x="860" y="361" width="24" height="2" fill="#4a0404"/>
<rect x="860" y="363" width="24" height="9" fill="#72fce0"/>
<rect x="860" y="372" width="24" height="2" fill="#fffb98"/>
<rect x="860" y="374" width="24" height="4" fill="#8af43f"/>
<rect x="860" y="379" width="24" height="6" fill="#e492f6"/>
<path d="M860.5 354.5H884.5V361.5H860.5Z" fill="none" stroke="#101010" stroke-width="1"/>
<path d="M860.5 361.5H884.5V363.5H860.5Z" fill="none" stroke="#101010" stroke-width="1"/>
<path d="M860.5 363.5H884.5V372.5H860.5Z" fill="none" stroke="#101010" stroke-width="1"/>
<path d="M860.5 372.5H884.5V374.5H860.5Z" fill="none" stroke="#101010" stroke-width="1"/>
<path d="M860.5 374.5H884.5V378.5H860.5Z" fill="none" stroke="#101010" stroke-width="1"/>
<path d="M860.5 379.5H884.5V385.5H860.5Z" fill="none" stroke="#101010" stroke-width="1"/>
<rect x="258" y="378" width="626" height="2" fill="#1e1e1e"/>
<rect x="304" y="379" width="1" height="4" fill="#1e1e1e"/>
<rect x="328" y="379" width="1" height="4" fill="#1e1e1e"/>
<rect x="352" y="379" width="1" height="4" fill="#1e1e1e"/>
<rect x="377" y="379" width="1" height="4" fill="#1e1e1e"/>
<rect x="401" y="379" width="1" height="4" fill="#1e1e1e"/>
<rect x="425" y="379" width="1" height="4" fill="#1e1e1e"/>
<rect x="449" y="379" width="1" height="4" fill="#1e1e1e"/>
<rect x="473" y="379" width="1" height="4" fill="#1e1e1e"/>
<rect x="497" y="379" width="1" height="4" fill="#1e1e1e"/>
<rect x="522" y="379" width="1" height="4" fill="#1e1e1e"/>
<rect x="546" y="379" width="1" height="4" fill="#1e1e1e"/>
<rect x="570" y="379" width="1" height="4" fill="#1e1e1e"/>
<rect x="594" y="379" width="1" height="4" fill="#1e1e1e"/>
<rect x="618" y="379" width="1" height="4" fill="#1e1e1e"/>
<rect x="642" y="379" width="1" height="4" fill="#1e1e1e"/>
<rect x="667" y="379" width="1" height="4" fill="#1e1e1e"/>
<rect x="691" y="379" width="1" height="4" fill="#1e1e1e"/>
<rect x="715" y="379" width="1" height="4" fill="#1e1e1e"/>
<rect x="739" y="379" width="1" height="4" fill="#1e1e1e"/>
<rect x="763" y="379" width="1" height="4" fill="#1e1e1e"/>
<rect x="787" y="379" width="1" height="4" fill="#1e1e1e"/>
<rect x="812" y="379" width="1" height="4" fill="#1e1e1e"/>
<rect x="836" y="379" width="1" height="4" fill="#1e1e1e"/>
<rect x="860" y="379" width="1" height="4" fill="#1e1e1e"/>
<rect x="884" y="379" width="1" height="4" fill="#1e1e1e"/>
<rect x="304" y="100" width="2" height="344" fill="#6b6b6b"/>
<rect x="301" y="148" width="7" height="1" fill="#2a2a2a"/>
<rect x="301" y="194" width="7" height="1" fill="#2a2a2a"/>
<rect x="301" y="240" width="7" height="1" fill="#2a2a2a"/>
<rect x="301" y="287" width="7" height="1" fill="#2a2a2a"/>
<rect x="301" y="333" width="7" height="1" fill="#2a2a2a"/>
<rect x="884" y="101" width="1" height="355" fill="#1e1e1e"/>
<rect x="880" y="108" width="8" height="1" fill="#1e1e1e"/>
<rect x="880" y="143" width="8" height="1" fill="#1e1e1e"/>
<rect x="880" y="178" width="8" height="1" fill="#1e1e1e"/>
<rect x="880" y="214" width="8" height="1" fill="#1e1e1e"/>
<rect x="880" y="249" width="8" height="1" fill="#1e1e1e"/>
<rect x="880" y="284" width="8" height="1" fill="#1e1e1e"/>
<rect x="880" y="319" width="8" height="1" fill="#1e1e1e"/>
<rect x="880" y="355" width="8" height="1" fill="#1e1e1e"/>
<rect x="880" y="390" width="8" height="1" fill="#1e1e1e"/>
<rect x="880" y="425" width="8" height="1" fill="#1e1e1e"/>
<g shape-rendering="geometricPrecision" fill="none" stroke-linejoin="round" stroke-linecap="round">
<line x1="316" y1="266.3" x2="874" y2="266.3" stroke="#000080" stroke-width="3"/>
<polyline points="317.2,363.8 341.0,380.0 365.6,396.9 387.5,403.9 412.5,409.4 438.3,383.6 450.3,356.4 462.1,334.4 474.0,317.5 497.7,285.4 508.8,270.0 523.4,247.0 546.9,220.6 570.3,197.1 587.9,178.6 604.9,162.0 627.1,147.1 651.9,134.8 679.1,125.3 701.4,131.0 726.1,141.7 740.0,154.6 753.8,165.8 775.8,198.0 799.5,231.8 818.0,248.7 835.0,266.3 848.5,284.2 872.2,303.5" stroke="#800080" stroke-width="2.6"/>
<polyline points="316.4,368.4 334.0,372.5 351.6,376.2 373.4,379.7 388.3,381.2 400.0,378.8 412.5,375.0 426.0,362.5 439.0,350.0 448.6,337.8 462.1,317.5 466.4,293.8 474.8,260.0 485.6,205.3 500.0,193.2 509.8,182.5 534.2,171.8 556.6,172.7 582.0,181.5 584.0,184.5 606.1,280.8 629.6,286.2 654.4,194.2 666.7,183.0 679.1,173.9 702.6,164.0 715.8,212.8 727.4,258.5 740.0,274.6 752.0,292.7 775.8,320.4 799.5,331.6 821.5,340.0 845.2,348.5 872.2,354.2" stroke="#f00000" stroke-width="2.7"/>
</g>
<rect x="347" y="469" width="25" height="12" fill="#8af43f"/>
<rect x="347" y="484" width="25" height="12" fill="#fffb98"/>
<rect x="347" y="500" width="25" height="12" fill="#72fce0"/>
<rect x="347" y="515" width="25" height="12" fill="#ffb947"/>
<rect x="490" y="469" width="25" height="12" fill="#7d7dff"/>
<rect x="490" y="484" width="25" height="12" fill="#e8a2f8"/>
<rect x="490" y="500" width="25" height="12" fill="#007800"/>
<rect x="490" y="515" width="25" height="12" fill="#780000"/>
<rect x="666" y="476" width="25" height="4" fill="#f00000"/>
<rect x="666" y="490" width="25" height="4" fill="#000080"/>
<rect x="666" y="504" width="25" height="4" fill="#800080"/>
</svg>
<div class="t" style="left:259px;top:103px;font-size:10px;color:#222;background:#f0f0f0;padding-bottom:2px">W</div>
<div class="t" style="left:266.5px;top:144.7px;font-size:10px;letter-spacing:-0.3px;color:#1a1a1a">10000</div>
<div class="t" style="left:266.5px;top:190.9px;font-size:10px;letter-spacing:-0.3px;color:#1a1a1a">8000</div>
<div class="t" style="left:266.5px;top:237.2px;font-size:10px;letter-spacing:-0.3px;color:#1a1a1a">6000</div>
<div class="t" style="left:266.5px;top:283.4px;font-size:10px;letter-spacing:-0.3px;color:#1a1a1a">4000</div>
<div class="t" style="left:266.5px;top:329.7px;font-size:10px;letter-spacing:-0.3px;color:#1a1a1a">2000</div>
<div class="t" style="left:891.5px;top:104.6px;font-size:10px;letter-spacing:-0.4px;color:#1a1a1a">33 &deg;C</div>
<div class="t" style="left:891.5px;top:139.9px;font-size:10px;letter-spacing:-0.4px;color:#1a1a1a">31</div>
<div class="t" style="left:891.5px;top:175.1px;font-size:10px;letter-spacing:-0.4px;color:#1a1a1a">29</div>
<div class="t" style="left:891.5px;top:210.4px;font-size:10px;letter-spacing:-0.4px;color:#1a1a1a">27</div>
<div class="t" style="left:891.5px;top:245.6px;font-size:10px;letter-spacing:-0.4px;color:#1a1a1a">25</div>
<div class="t" style="left:891.5px;top:280.9px;font-size:10px;letter-spacing:-0.4px;color:#1a1a1a">23</div>
<div class="t" style="left:891.5px;top:316.2px;font-size:10px;letter-spacing:-0.4px;color:#1a1a1a">21</div>
<div class="t" style="left:891.5px;top:351.4px;font-size:10px;letter-spacing:-0.4px;color:#1a1a1a">19</div>
<div class="t" style="left:891.5px;top:386.7px;font-size:10px;letter-spacing:-0.4px;color:#1a1a1a">17</div>
<div class="t" style="left:891.5px;top:421.9px;font-size:10px;letter-spacing:-0.4px;color:#1a1a1a">15</div>
<div class="t" style="left:259px;top:447.2px;font-size:10px;letter-spacing:-0.3px;color:#1a1a1a">Uur</div>
<div class="t" style="left:304.0px;top:447.2px;font-size:10px;letter-spacing:-0.4px;color:#1a1a1a">0</div>
<div class="t" style="left:328.2px;top:447.2px;font-size:10px;letter-spacing:-0.4px;color:#1a1a1a">1</div>
<div class="t" style="left:352.3px;top:447.2px;font-size:10px;letter-spacing:-0.4px;color:#1a1a1a">2</div>
<div class="t" style="left:376.5px;top:447.2px;font-size:10px;letter-spacing:-0.4px;color:#1a1a1a">3</div>
<div class="t" style="left:400.7px;top:447.2px;font-size:10px;letter-spacing:-0.4px;color:#1a1a1a">4</div>
<div class="t" style="left:424.9px;top:447.2px;font-size:10px;letter-spacing:-0.4px;color:#1a1a1a">5</div>
<div class="t" style="left:449.0px;top:447.2px;font-size:10px;letter-spacing:-0.4px;color:#1a1a1a">6</div>
<div class="t" style="left:473.2px;top:447.2px;font-size:10px;letter-spacing:-0.4px;color:#1a1a1a">7</div>
<div class="t" style="left:497.4px;top:447.2px;font-size:10px;letter-spacing:-0.4px;color:#1a1a1a">8</div>
<div class="t" style="left:521.5px;top:447.2px;font-size:10px;letter-spacing:-0.4px;color:#1a1a1a">9</div>
<div class="t" style="left:545.7px;top:447.2px;font-size:10px;letter-spacing:-0.4px;color:#1a1a1a">10</div>
<div class="t" style="left:569.9px;top:447.2px;font-size:10px;letter-spacing:-0.4px;color:#1a1a1a">11</div>
<div class="t" style="left:594.0px;top:447.2px;font-size:10px;letter-spacing:-0.4px;color:#1a1a1a">12</div>
<div class="t" style="left:618.2px;top:447.2px;font-size:10px;letter-spacing:-0.4px;color:#1a1a1a">13</div>
<div class="t" style="left:642.4px;top:447.2px;font-size:10px;letter-spacing:-0.4px;color:#1a1a1a">14</div>
<div class="t" style="left:666.5px;top:447.2px;font-size:10px;letter-spacing:-0.4px;color:#1a1a1a">15</div>
<div class="t" style="left:690.7px;top:447.2px;font-size:10px;letter-spacing:-0.4px;color:#1a1a1a">16</div>
<div class="t" style="left:714.9px;top:447.2px;font-size:10px;letter-spacing:-0.4px;color:#1a1a1a">17</div>
<div class="t" style="left:739.1px;top:447.2px;font-size:10px;letter-spacing:-0.4px;color:#1a1a1a">18</div>
<div class="t" style="left:763.2px;top:447.2px;font-size:10px;letter-spacing:-0.4px;color:#1a1a1a">19</div>
<div class="t" style="left:787.4px;top:447.2px;font-size:10px;letter-spacing:-0.4px;color:#1a1a1a">20</div>
<div class="t" style="left:811.6px;top:447.2px;font-size:10px;letter-spacing:-0.4px;color:#1a1a1a">21</div>
<div class="t" style="left:835.7px;top:447.2px;font-size:10px;letter-spacing:-0.4px;color:#1a1a1a">22</div>
<div class="t" style="left:859.9px;top:447.2px;font-size:10px;letter-spacing:-0.4px;color:#1a1a1a">23</div>
<!-- BOTTOM -->
<div class="a" style="left:211px;top:560px;width:813px;height:5px;background:#c2d6f0"></div>
<div class="a" style="left:211px;top:565px;width:813px;height:163px;background:#fff"></div>
<div class="a" style="left:211px;top:727px;width:813px;height:1px;background:#a3b0c2"></div>
<div class="a" style="left:211px;top:728px;width:813px;height:18px;background:#e3eaf5"></div>

<!-- STATUS -->
<svg class="a" style="left:7px;top:746px" width="1017" height="18"><defs><linearGradient id="sg" x1="0" y1="0" x2="1" y2="0"><stop offset="0" stop-color="#3762ac"/><stop offset="0.62" stop-color="#4b7dc3"/><stop offset="1" stop-color="#4b7dc3"/></linearGradient></defs>
<rect width="1017" height="18" fill="url(#sg)"/><path d="M650 18C680 12 700 4 715 0H1017V18Z" fill="#3f6db6"/></svg>
<div class="a" style="left:0;top:763px;width:1024px;height:5px;background:#d6e4f5"></div>
<div class="t" style="left:11px;top:750px;font-size:10.9px;color:#f4f8ff">F1 drukken voor helpfunctie.</div>

<!-- BOTTOM PANEL TEXT -->
<div class="a" style="left:495px;top:565px;width:1px;height:162px;background:#c8dcf4"></div>
<div class="a" style="left:616px;top:565px;width:3px;height:162px;background:#c4d9f3"></div>
<div class="a" style="left:900px;top:565px;width:1px;height:162px;background:#c8dcf4"></div>
<div class="a" style="left:1007px;top:565px;width:15px;height:162px;background:#f1f2f4"></div>
<div class="a" style="left:1008px;top:582px;width:13px;height:128px;border:1px solid #b9bdc2;border-radius:2px;background:linear-gradient(90deg,#f2f2f2,#dcdcdc 60%,#cfcfcf)"></div>
<svg class="a" style="left:1011px;top:572px" width="9" height="5"><path d="M0.5 4.5L4 0.5L7.5 4.5Z" fill="#404040"/></svg>
<svg class="a" style="left:1011px;top:718px" width="9" height="5"><path d="M0.5 0.5L4 4.5L7.5 0.5Z" fill="#404040"/></svg>
<svg class="a" style="left:1011px;top:641px" width="7" height="7"><path d="M0 1H7M0 3.5H7M0 6H7" stroke="#777" stroke-width="1"/></svg>
<div class="a" style="left:218px;top:569px;font-size:12.1px;line-height:15.8px;color:#1a1a1a;white-space:nowrap">Ruimte: Tekenzaal<br>- Droge koellast personen<br>- Verlichting<br>- Machines<br>- Doorstroming<br>- aangrenzende ruimte<br>- Vocht koellast personen (24.0 &deg;C)<br>- Waterdamp afgifte van personen (24.0 &deg;C)</div>
<div class="a" style="left:500px;top:569px;width:56px;text-align:right;font-size:12.1px;line-height:15.8px;color:#1a1a1a;white-space:nowrap"><br>3132<br>1552<br>0<br>0<br>156<br>1920<br>2880</div>
<div class="a" style="left:560px;top:569px;font-size:12.1px;line-height:15.8px;color:#1a1a1a;white-space:nowrap"><br>W<br>W<br>W<br>W<br>W<br>W<br>g/h</div>
<div class="a" style="left:622px;top:569px;font-size:12.1px;line-height:15.8px;color:#1a1a1a;white-space:nowrap"><br>- Buitenoppervlaktes<br>- Transmissiewarmte ramen<br>- Warmtestraling ramen<br><br><span style="letter-spacing:-0.2px">Koellastresultaat (Juli, 16&hellip;17 uur)</span><br>- Koellast per m&sup2;<br>- Koellast per m&sup3;</div>
<div class="a" style="left:900px;top:569px;width:58px;text-align:right;font-size:12.1px;line-height:15.8px;color:#1a1a1a;white-space:nowrap"><br>387<br>1004<br>3092<br><br>9323<br>39<br>13</div>
<div class="a" style="left:963px;top:569px;font-size:12.1px;line-height:15.8px;color:#1a1a1a;white-space:nowrap"><br>W<br>W<br>W<br><br>W<br>W/m&sup2;<br>W/m&sup3;</div>

<!-- BOTTOM TABS -->
<svg class="a" style="left:215px;top:731px" width="30" height="11"><path d="M1 5.5L5 1.5V4H8V7H5V9.5Z" fill="#5a7fb4"/><path d="M24 5.5L20 1.5V4H17V7H20V9.5Z" fill="#5a7fb4"/></svg>
<svg class="a" style="left:0;top:0" width="1024" height="768">
<defs><linearGradient id="tg" x1="0" y1="0" x2="0" y2="1"><stop offset="0" stop-color="#c3d6f0"/><stop offset="0.6" stop-color="#dde8f7"/><stop offset="1" stop-color="#eaf1fa"/></linearGradient>
<linearGradient id="tga" x1="0" y1="0" x2="0" y2="1"><stop offset="0" stop-color="#ffffff"/><stop offset="0.7" stop-color="#f6f9fd"/><stop offset="1" stop-color="#dfe9f6"/></linearGradient></defs>
<path d="M455.1 727.5L447.5 737V741.5Q447.5 743 449.5 743H473.6L489.3 727.5" fill="url(#tg)" stroke="#8d9fb8"/>
<path d="M373 727.5L365.5 737V741.5Q365.5 743 367.5 743H440.8L455.1 727.5" fill="url(#tg)" stroke="#8d9fb8"/>
<path d="M243.5 727.5V741.5Q243.5 743 245.5 743H291.4L298.9 727.5" fill="url(#tg)" stroke="#8d9fb8"/>
<path d="M298.9 727.5V741.5Q298.9 743 300.9 743H357.7L365.2 727.5" fill="url(#tga)" stroke="#8d9fb8"/>
</svg>
<div class="t" style="left:257px;top:731px;font-size:9.8px;color:#1a2a44">Protocol</div>
<div class="t" style="left:307px;top:731px;font-size:10.4px;font-weight:bold;color:#1a1a1a">Resultaten</div>
<div class="t" style="left:381px;top:731px;font-size:9.6px;color:#1a2a44">Opmerkingen</div>
<div class="t" style="left:458px;top:731px;font-size:9.8px;color:#1a2a44">Help</div>

<!-- LINEAR BADGE -->
<div class="a" style="left:951px;top:747px;width:59px;height:16px;background:#7391c6;border-left:1px solid #c8d6ee;border-right:1px solid #c8d6ee"></div>
<div class="t" style="left:955px;top:749px;font-family:'Liberation Serif',serif;font-weight:bold;font-size:13px;color:#0a0a14">liNear</div>
<svg class="a" style="left:1012px;top:750px" width="12" height="13"><path d="M10 2L2 10M10 6L6 10M10 10" stroke="#9fb8e0" stroke-width="1.2" stroke-dasharray="1.2 1.3"/></svg>
</body></html>
